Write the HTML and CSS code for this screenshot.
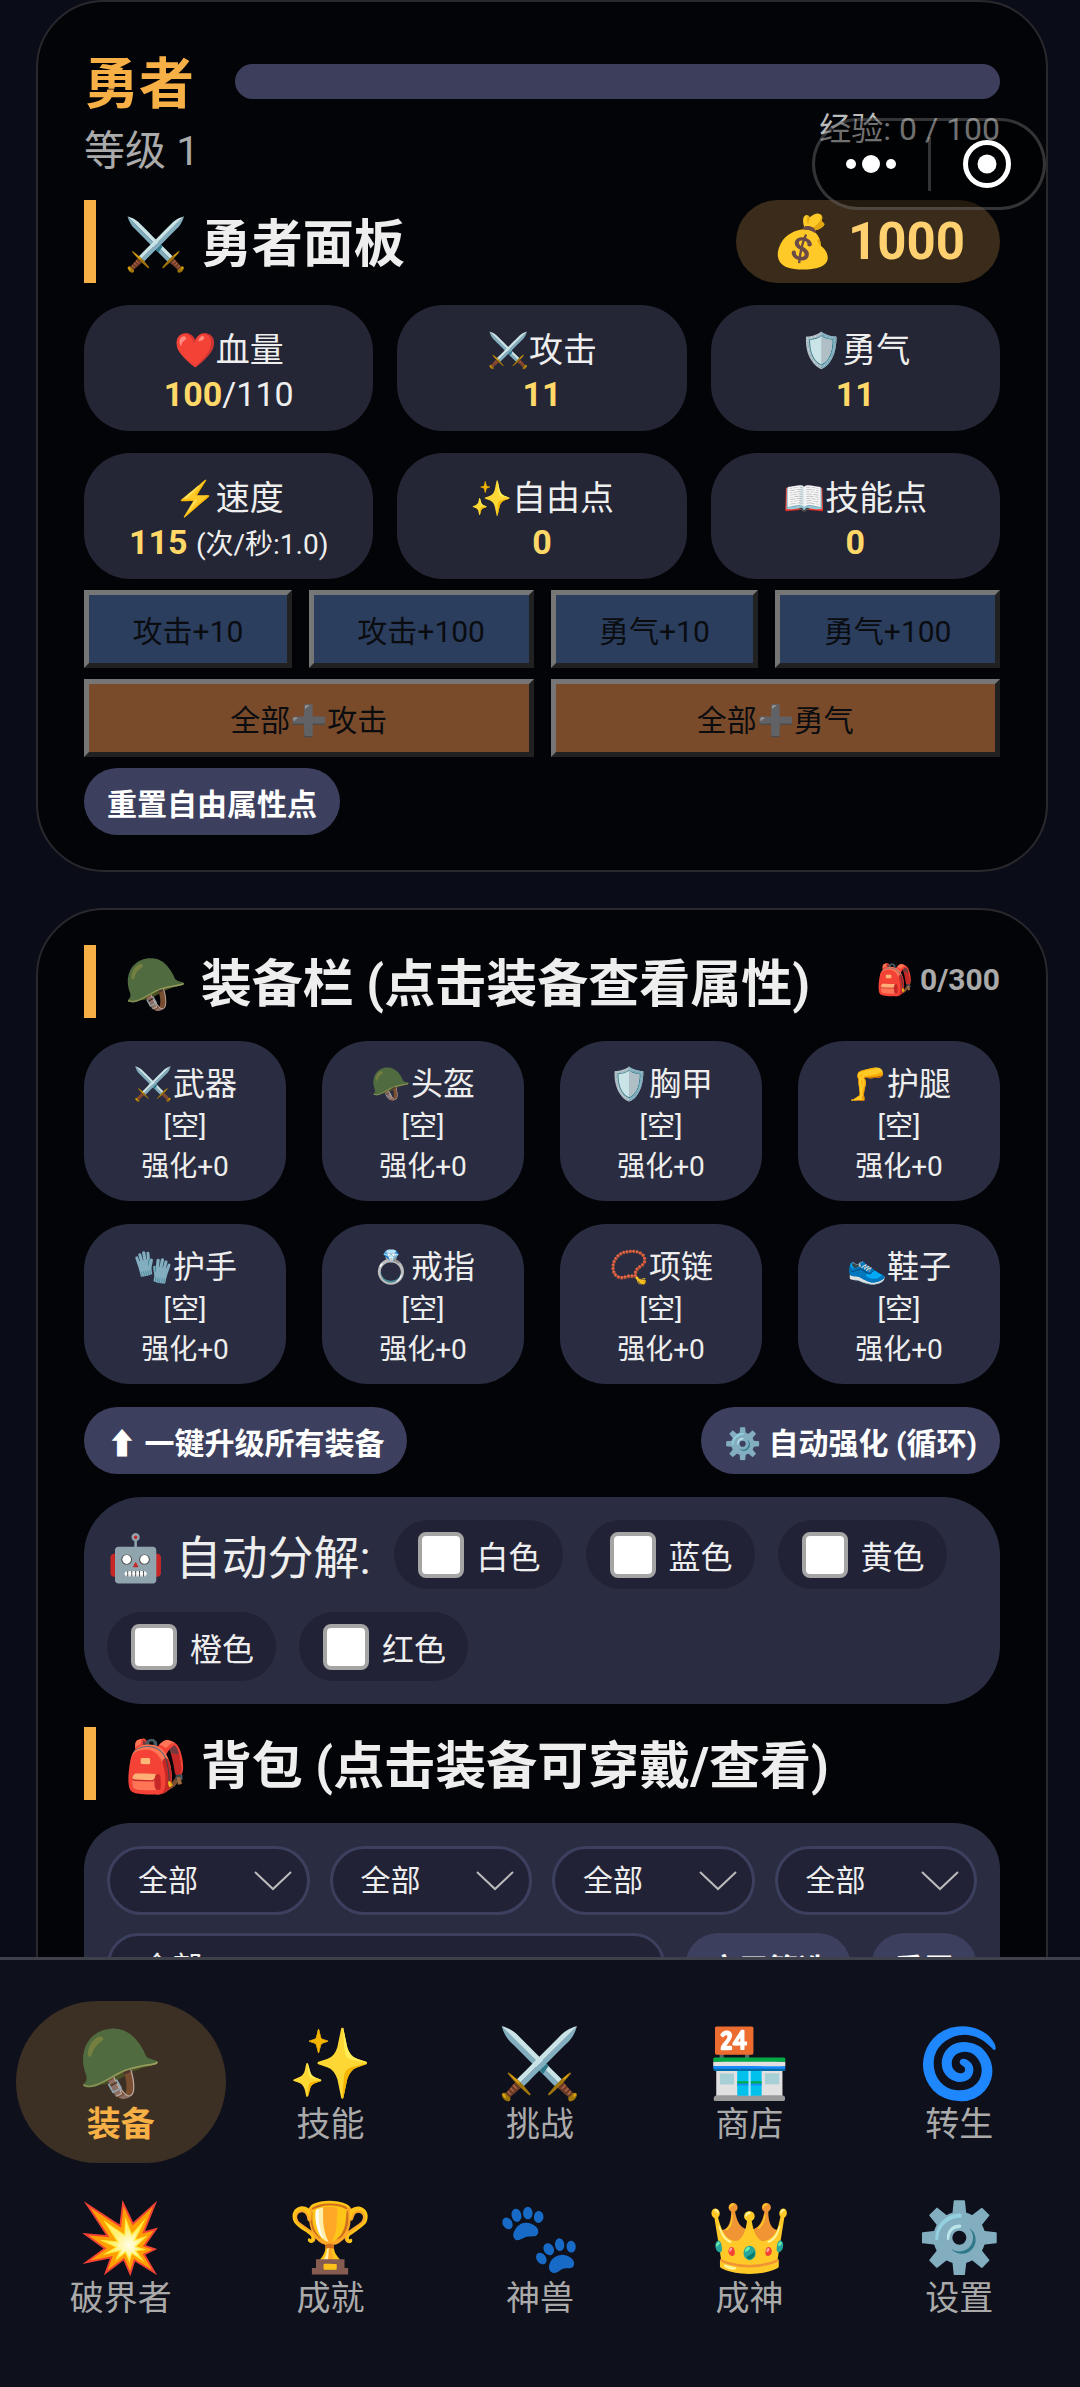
FILE: index.html
```
<!DOCTYPE html>
<html lang="zh-CN">
<head>
    <meta charset="UTF-8">
    <meta name="viewport" content="width=device-width, initial-scale=1.0">
    <title>勇者</title>
    <link rel="stylesheet" href="styles.css">
</head>
<body>
    <main class="page">
        <section class="card">
            <div class="hero">
                <div class="hero-info">
                    <h1 class="hero-name">勇者</h1>
                    <div class="hero-level">等级 1</div>
                </div>
                <div class="exp">
                    <div class="exp-bar"></div>
                    <div class="exp-text">经验: 0 / 100</div>
                </div>
            </div>
            <div class="section-head">
                <h2 class="section-title tall">⚔️ 勇者面板</h2>
                <div class="gold">💰 1000</div>
            </div>
            <div class="stats">
                <div class="stat">❤️血量<br><b>100</b>/110</div>
                <div class="stat">⚔️攻击<br><b>11</b></div>
                <div class="stat">🛡️勇气<br><b>11</b></div>
                <div class="stat">⚡速度<br><b>115</b> <small>(次/秒:1.0)</small></div>
                <div class="stat">✨自由点<br><b>0</b></div>
                <div class="stat">📖技能点<br><b>0</b></div>
            </div>
            <div class="points">
                <button class="point-btn" disabled>攻击+10</button>
                <button class="point-btn" disabled>攻击+100</button>
                <button class="point-btn" disabled>勇气+10</button>
                <button class="point-btn" disabled>勇气+100</button>
            </div>
            <div class="points">
                <button class="point-btn all" disabled>全部➕攻击</button>
                <button class="point-btn all" disabled>全部➕勇气</button>
            </div>
            <button class="btn">重置自由属性点</button>
        </section>

        <section class="card">
            <div class="section-head">
                <h2 class="section-title">🪖 装备栏 (点击装备查看属性)</h2>
                <div class="bag-count">🎒 0/300</div>
            </div>
            <div class="slots">
                <div class="slot"><span class="slot-name">⚔️武器</span><span>[空]</span><span>强化+0</span></div>
                <div class="slot"><span class="slot-name">🪖头盔</span><span>[空]</span><span>强化+0</span></div>
                <div class="slot"><span class="slot-name">🛡️胸甲</span><span>[空]</span><span>强化+0</span></div>
                <div class="slot"><span class="slot-name">🦵护腿</span><span>[空]</span><span>强化+0</span></div>
                <div class="slot"><span class="slot-name">🧤护手</span><span>[空]</span><span>强化+0</span></div>
                <div class="slot"><span class="slot-name">💍戒指</span><span>[空]</span><span>强化+0</span></div>
                <div class="slot"><span class="slot-name">📿项链</span><span>[空]</span><span>强化+0</span></div>
                <div class="slot"><span class="slot-name">👟鞋子</span><span>[空]</span><span>强化+0</span></div>
            </div>
            <div class="actions">
                <button class="btn">⬆ 一键升级所有装备</button>
                <button class="btn">⚙️ 自动强化 (循环)</button>
            </div>
            <div class="auto">
                <span class="auto-title">🤖 自动分解:</span>
                <label class="check"><input type="checkbox">白色</label>
                <label class="check"><input type="checkbox">蓝色</label>
                <label class="check"><input type="checkbox">黄色</label>
                <label class="check"><input type="checkbox">橙色</label>
                <label class="check"><input type="checkbox">红色</label>
            </div>
            <h2 class="section-title">🎒 背包 (点击装备可穿戴/查看)</h2>
            <div class="filter">
                <div class="filter-row">
                    <select class="select" aria-label="部位"><option>全部</option></select>
                    <select class="select" aria-label="品质"><option>全部</option></select>
                    <select class="select" aria-label="等级"><option>全部</option></select>
                    <select class="select" aria-label="强化"><option>全部</option></select>
                </div>
                <div class="filter-row">
                    <input class="search" type="text" value="全部" aria-label="筛选">
                    <button class="btn">应用筛选</button>
                    <button class="btn">重置</button>
                </div>
            </div>
        </section>
    </main>

    <div class="capsule">
        <button class="capsule-btn" aria-label="更多">
            <svg viewBox="0 0 50 20" width="50" height="20"><circle cx="5" cy="10" r="5"/><circle cx="25" cy="10" r="9"/><circle cx="45" cy="10" r="5"/></svg>
        </button>
        <span class="capsule-line"></span>
        <button class="capsule-btn" aria-label="关闭">
            <svg viewBox="0 0 50 50" width="50" height="50"><circle cx="25" cy="25" r="21.5" fill="none" stroke="#fff" stroke-width="5"/><circle cx="25" cy="25" r="9.5"/></svg>
        </button>
    </div>

    <nav class="tabs">
        <a class="tab active" href="#"><span class="tab-icon">🪖</span>装备</a>
        <a class="tab" href="#"><span class="tab-icon">✨</span>技能</a>
        <a class="tab" href="#"><span class="tab-icon">⚔️</span>挑战</a>
        <a class="tab" href="#"><span class="tab-icon">🏪</span>商店</a>
        <a class="tab" href="#"><span class="tab-icon">🌀</span>转生</a>
        <a class="tab" href="#"><span class="tab-icon">💥</span>破界者</a>
        <a class="tab" href="#"><span class="tab-icon">🏆</span>成就</a>
        <a class="tab" href="#"><span class="tab-icon">🐾</span>神兽</a>
        <a class="tab" href="#"><span class="tab-icon">👑</span>成神</a>
        <a class="tab" href="#"><span class="tab-icon">⚙️</span>设置</a>
    </nav>
</body>
</html>
```
FILE: styles.css
```
* {
    box-sizing: border-box;
}
body {
    margin: 0;
    height: 100vh;
    overflow: hidden;
    background: #0a0c18;
    color: #eee;
    font-family: Roboto, "Noto Sans CJK SC", sans-serif;
    font-size: 30px;
}
button, select, input {
    font-family: inherit;
    font-size: 30px;
}
.page {
    padding: 0 32px 0 36px;
}
.card {
    background: #030407;
    border: 2px solid #29292d;
    border-radius: 68px;
    padding: 35px 46px;
    margin-bottom: 36px;
}
.hero {
    display: flex;
    gap: 36px;
}
.hero-name {
    margin: 0;
    padding-top: 4px;
    color: #f7b045;
    font-size: 55px;
    line-height: 86px;
}
.hero-level {
    color: #aaa;
    font-size: 41px;
    line-height: 48px;
}
.exp {
    flex: 1;
    padding-top: 27px;
}
.exp-bar {
    height: 35px;
    border-radius: 18px;
    background: #3d3d5c;
}
.exp-text {
    margin-top: 12px;
    color: #bbb;
    font-size: 32px;
    line-height: 36px;
    text-align: right;
}
.section-head {
    display: flex;
    justify-content: space-between;
}
.hero + .section-head {
    margin-top: 25px;
}
.section-title {
    margin: 0;
    padding: 6px 0 0 28px;
    border-left: 12px solid #f7b045;
    font-size: 51px;
    line-height: 67px;
}
.section-title.tall {
    line-height: 77px;
}
.gold {
    padding: 0 35px;
    border-radius: 42px;
    background: #3a2b1a;
    color: #ffd070;
    font-size: 51px;
    font-weight: bold;
    line-height: 83px;
}
.stats {
    display: grid;
    grid-template-columns: repeat(3, 1fr);
    gap: 22px 24px;
    margin-top: 22px;
}
.stat {
    padding: 23px 0 15px;
    border-radius: 46px;
    background: #242635;
    font-size: 34px;
    line-height: 44px;
    text-align: center;
}
.stat b {
    color: #ffd868;
}
.stat small {
    font-size: 28px;
    line-height: 1;
}
.points {
    display: flex;
    gap: 17px;
    margin-top: 11px;
}
.point-btn {
    flex: 1 1 auto;
    height: 78px;
    padding: 0 12px;
    border: 5px outset #767676;
    background: #2b3e5e;
    color: #0a0c10;
}
.point-btn.all {
    background: #7a4b2a;
}
.btn {
    height: 67px;
    padding: 0 23px;
    border: 0;
    border-radius: 34px;
    background: #3d3f5e;
    color: #fff;
    font-weight: bold;
}
.points + .btn {
    margin-top: 11px;
}
.bag-count {
    color: #aaa;
    font-weight: bold;
    line-height: 70px;
}
.slots {
    display: grid;
    grid-template-columns: repeat(4, 1fr);
    gap: 23px 36px;
    margin-top: 23px;
}
.slot {
    display: flex;
    flex-direction: column;
    padding: 20px 0 14px;
    border-radius: 46px;
    background: #2a2d41;
    font-size: 28px;
    line-height: 40px;
    text-align: center;
}
.slot-name {
    font-size: 32px;
    line-height: 46px;
}
.actions {
    display: flex;
    justify-content: space-between;
    margin-top: 23px;
}
.auto {
    display: flex;
    flex-wrap: wrap;
    align-items: center;
    gap: 23px;
    margin: 23px 0;
    padding: 23px;
    border-radius: 58px;
    background: #2a2d41;
}
.auto-title {
    padding-top: 8px;
    font-size: 46px;
    line-height: 61px;
}
.check {
    display: flex;
    align-items: center;
    gap: 13px;
    height: 69px;
    padding: 0 22px 0 24px;
    border-radius: 35px;
    background: #212236;
    font-size: 32px;
}
.check input {
    appearance: none;
    width: 46px;
    height: 46px;
    margin: 0;
    border: 4px solid #a5a5a5;
    border-radius: 8px;
    background: #fff;
}
.check input:checked {
    background: #f7b045;
}
.filter {
    margin-top: 23px;
    padding: 23px;
    border-radius: 46px;
    background: #2a2d41;
}
.filter-row {
    display: flex;
    align-items: flex-start;
    gap: 20px;
    margin-bottom: 18px;
}
.select, .search {
    flex: 1;
    min-width: 0;
    border: 3px solid #3d3f5e;
    border-radius: 35px;
    background: #212236;
    color: #eee;
}
.select {
    height: 69px;
    padding: 0 28px;
    appearance: none;
    background-image: url("data:image/svg+xml,%3Csvg xmlns='http://www.w3.org/2000/svg' width='38' height='20'%3E%3Cpath d='M1 1 19 18 37 1' fill='none' stroke='%23bbb' stroke-width='2'/%3E%3C/svg%3E");
    background-repeat: no-repeat;
    background-position: right 15px center;
}
.search {
    height: 63px;
    padding: 0 32px;
}
.capsule {
    position: fixed;
    top: 118px;
    right: 34px;
    display: flex;
    align-items: center;
    width: 234px;
    height: 92px;
    border: 3px solid rgba(255, 255, 255, 0.2);
    border-radius: 46px;
    background: rgba(0, 0, 0, 0.4);
}
.capsule-btn {
    display: flex;
    flex: 1;
    align-items: center;
    justify-content: center;
    padding: 0;
    border: 0;
    background: none;
}
.capsule-btn svg {
    fill: #fff;
}
.capsule-line {
    width: 3px;
    height: 54px;
    background: rgba(255, 255, 255, 0.2);
}
.tabs {
    position: fixed;
    right: 0;
    bottom: 0;
    left: 0;
    display: grid;
    grid-template-columns: repeat(5, 1fr);
    gap: 12px 0;
    padding: 41px 16px 50px;
    border-top: 3px solid #3f414a;
    background: #0e101b;
}
.tab {
    display: flex;
    flex-direction: column;
    align-items: center;
    height: 162px;
    padding-top: 25px;
    border-radius: 81px;
    color: #aaa;
    font-size: 34px;
    line-height: 44px;
    text-decoration: none;
}
.tab-icon {
    font-size: 68px;
    line-height: 76px;
}
.tab.active {
    background: #3c2f24;
    color: #f7b045;
    font-weight: bold;
}
```
